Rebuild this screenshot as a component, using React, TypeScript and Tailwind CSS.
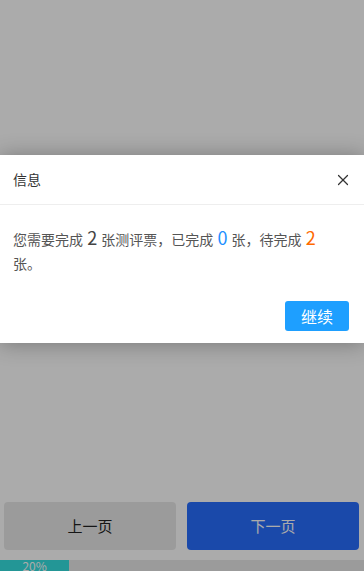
import React from 'react';
import { X } from 'lucide-react';

const FONT = { fontFamily: '"Noto Sans CJK SC", "Noto Sans", sans-serif' };

export default function App() {
  const progress = 19;
  const total = 2;
  const done = 0;
  const pending = total - done;

  return (
    <div className="relative h-screen w-full overflow-hidden bg-white" style={FONT}>
      {/* Page */}
      <div className="flex h-full flex-col">
        <div className="flex-1" />
        <div className="grid grid-cols-2 gap-[11px] pl-[4px] pr-[5px]">
          <button className="h-[48px] rounded-[4px] bg-[#e8e8e8] text-[15px] text-[#222]">上一页</button>
          <button className="h-[48px] rounded-[4px] bg-[#276efe] text-[15px] text-white">下一页</button>
        </div>
        <div className="mt-[10px] h-[11px] w-full bg-[#e8e8e8]">
          <div
            className="flex h-full items-start justify-center bg-[#35e0e0] text-[12px] leading-[12px] text-white"
            style={{ width: `${progress}%` }}
          >
            20%
          </div>
        </div>
      </div>

      {/* Shade */}
      <div className="absolute inset-0 bg-black/[0.33]" />

      {/* Dialog */}
      <div className="absolute left-0 right-0 top-[155px] bg-white shadow-[0_1px_20px_rgba(0,0,0,0.3)]">
        <div className="flex h-[50px] items-center justify-between border-b border-[#eeeeee] pl-[13px] pr-[12px]">
          <span className="text-[14px] text-[#333]">信息</span>
          <X size={18} strokeWidth={1.6} className="text-[#333]" />
        </div>
        <div className="pl-[13px] pr-[30px] pt-[20px] text-[14px] leading-[24px] text-[#555]">
          您需要完成 <span className="mx-[1px] text-[18px] text-[#444]">{total}</span> 张测评票，已完成{' '}
          <span className="mx-[1px] text-[18px] text-[#1e90ff]">{done}</span> 张，待完成{' '}
          <span className="mx-[1px] text-[18px] text-[#ff6a00]">{pending}</span> 张。
        </div>
        <div className="flex justify-end pb-[12px] pr-[15px] pt-[26px]">
          <button className="h-[30px] w-[64px] rounded-[3px] bg-[#1e9fff] text-[16px] text-white">继续</button>
        </div>
      </div>
    </div>
  );
}
